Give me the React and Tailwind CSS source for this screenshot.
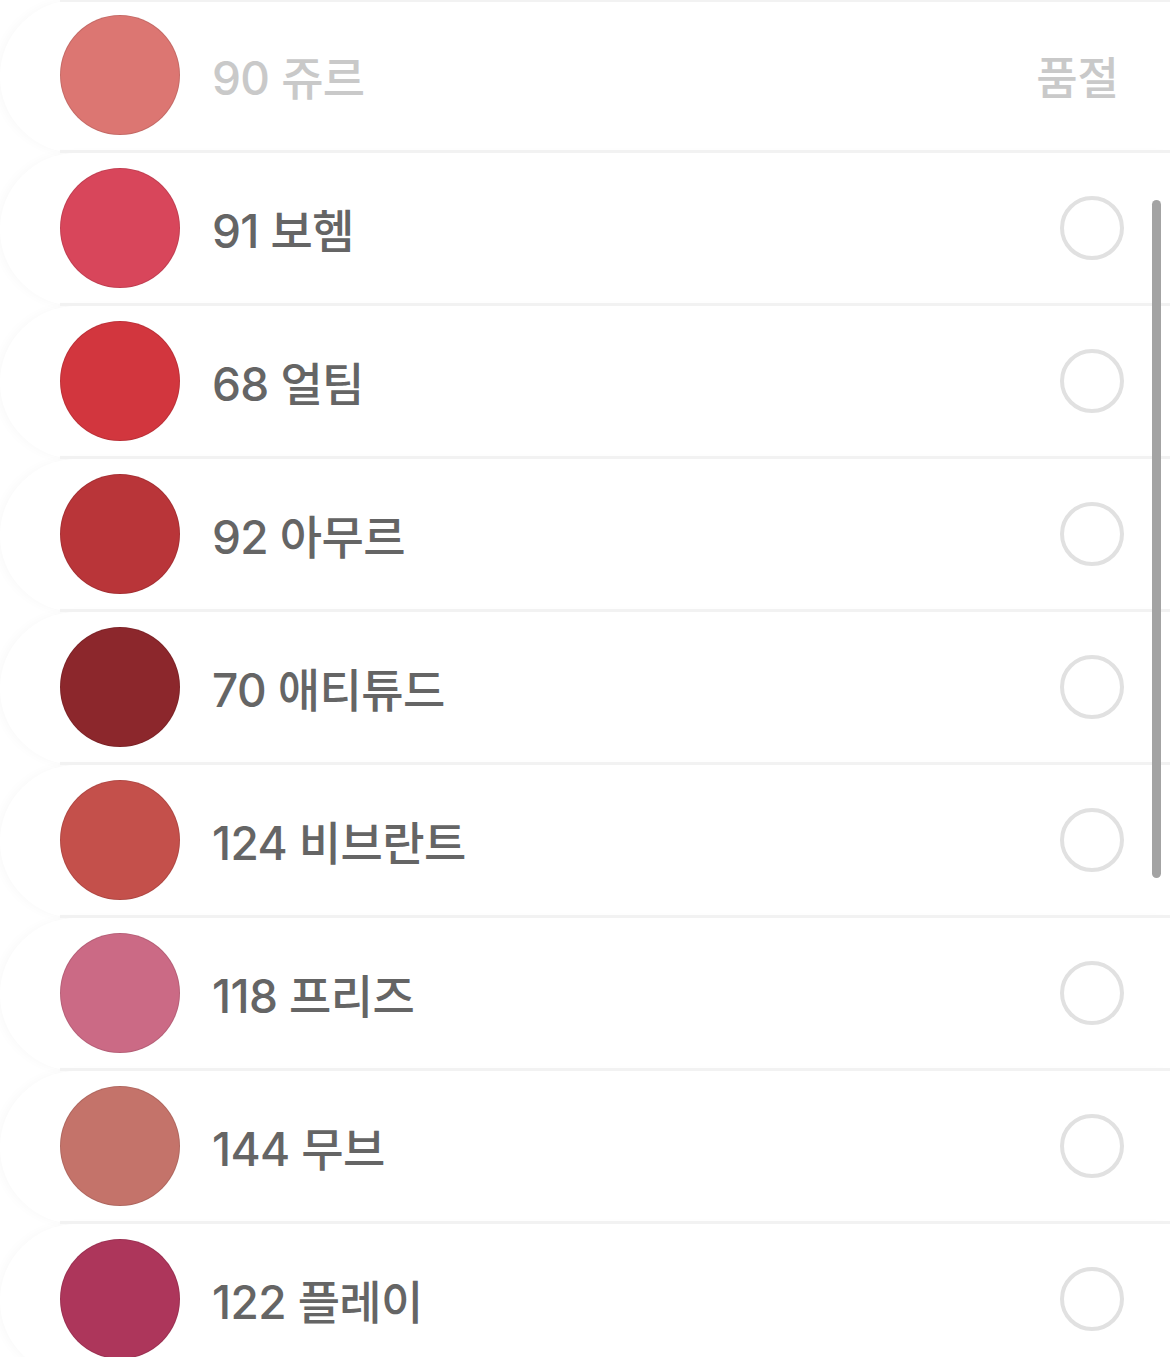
import React from 'react';

const shades = [
  { name: '90 쥬르', color: '#dc7672', soldOut: true },
  { name: '91 보헴', color: '#d8465b' },
  { name: '68 얼팀', color: '#d2363e' },
  { name: '92 아무르', color: '#b93539' },
  { name: '70 애티튜드', color: '#8c272c' },
  { name: '124 비브란트', color: '#c4504b' },
  { name: '118 프리즈', color: '#cb6a85' },
  { name: '144 무브', color: '#c4736a' },
  { name: '122 플레이', color: '#ad365b' },
];

const ShadeRow = ({ shade }) => (
  <div className="flex h-[153px] rounded-l-[80px] shadow-[-4px_0_10px_rgba(0,0,0,0.025)] bg-white">
    <div className="ml-[60px] flex flex-1 items-center border-b-[3px] border-[#f2f2f2] h-[153px] pr-[46px]">
      <div
        className="w-[120px] h-[120px] rounded-full shrink-0 border border-black/10"
        style={{ backgroundColor: shade.color }}
      />
      <span
        className={`ml-[32px] pt-[5px] flex-1 text-[46px] font-medium tracking-[-0.6px] leading-none ${
          shade.soldOut ? 'text-[#c9c9c9]' : 'text-[#656565]'
        }`}
      >
        {shade.name}
      </span>
      {shade.soldOut ? (
        <span className="pt-[6px] text-[45px] font-medium text-[#c9c9c9] mr-[5px] leading-none">품절</span>
      ) : (
        <div className="w-[64px] h-[64px] rounded-full border-[4px] border-[#e1e1e1]" />
      )}
    </div>
  </div>
);

const App = () => {
  return (
    <div
      className="relative h-[1357px] w-[1170px] overflow-hidden bg-white"
      style={{ fontFamily: 'Inter, "Noto Sans CJK KR", sans-serif' }}
    >
      <div className="ml-[60px] h-[2px] bg-[#f2f2f2] -mb-[2px] relative z-10" />
      {shades.map((shade) => (
        <ShadeRow key={shade.name} shade={shade} />
      ))}
      {/* scroll indicator */}
      <div className="absolute left-[1152px] top-[200px] w-[9px] h-[678px] rounded-full bg-[#a3a3a3]" />
    </div>
  );
};

export default App;
